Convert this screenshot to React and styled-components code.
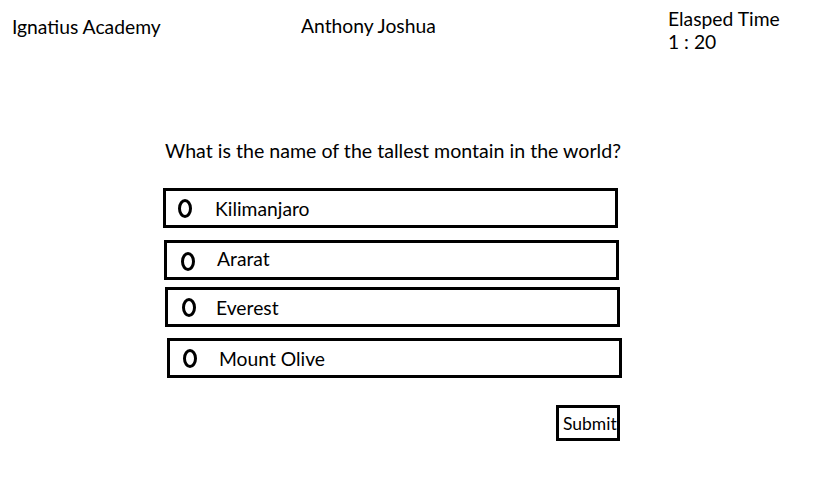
import React from "react";
import styled, { createGlobalStyle } from "styled-components";

const Global = createGlobalStyle`
  html, body { margin: 0; padding: 0; background: #fff; }
  body { font-family: Lato, "Noto Sans", sans-serif; color: #000; }
`;

const Page = styled.div`
  width: 838px;
  height: 499px;
  background: #fff;
  font-size: 19.3px;
  line-height: 22px;
`;

const Header = styled.header`
  display: grid;
  grid-template-columns: 289px 367px auto;
  padding-left: 12px;
  height: 60px;
  box-sizing: border-box;
`;

const Brand = styled.div`
  padding-top: ${(p) => p.$top}px;
`;

const Timer = styled.div`
  padding-top: 7px;
  display: flex;
  flex-direction: column;
  line-height: 23px;
`;

const Main = styled.main`
  display: flex;
  flex-direction: column;
  align-items: flex-start;
  padding-left: 163px;
  padding-top: 80px;
`;

const Question = styled.p`
  margin: 0 0 0 2px;
  font-size: 19.6px;
`;

const Options = styled.div`
  display: flex;
  flex-direction: column;
  margin-top: 26px;
`;

const Option = styled.label`
  box-sizing: border-box;
  display: flex;
  align-items: center;
  width: 455px;
  height: 40px;
  margin-left: ${(p) => p.$shift}px;
  margin-top: ${(p) => p.$gap}px;
  border: 3px solid #000;
  padding-left: ${(p) => p.$radioX}px;
  cursor: pointer;
`;

const Radio = styled.span`
  box-sizing: border-box;
  width: 14px;
  height: 19px;
  border: 3px solid #000;
  border-radius: 50%;
  margin-top: ${(p) => p.$dy}px;
  flex: none;
`;

const OptionText = styled.span`
  margin-left: ${(p) => p.$textX}px;
  margin-top: ${(p) => p.$ty}px;
`;

const Actions = styled.div`
  display: flex;
  justify-content: flex-end;
  width: 457px;
  margin-top: 27px;
`;

const Submit = styled.button`
  box-sizing: border-box;
  width: 64px;
  height: 36px;
  border: 3px solid #000;
  background: #fff;
  padding: 0 0 0 4px;
  font-family: Lato, "Noto Sans", sans-serif;
  font-size: 17.5px;
  color: #000;
  text-align: left;
  overflow: visible;
  white-space: nowrap;
  cursor: pointer;
`;

const options = [
  { label: "Kilimanjaro", shift: 0, gap: 0, radioX: 12, textX: 23, dy: 0, ty: 2 },
  { label: "Ararat", shift: 1, gap: 12, radioX: 14, textX: 22, dy: 3, ty: -2 },
  { label: "Everest", shift: 2, gap: 7, radioX: 14, textX: 20, dy: 0, ty: 1 },
  { label: "Mount Olive", shift: 4, gap: 11, radioX: 13, textX: 22, dy: 0, ty: 2 },
];

export default function App() {
  return (
    <Page>
      <Global />
      <Header>
        <Brand $top={16}>Ignatius Academy</Brand>
        <Brand $top={15}>Anthony Joshua</Brand>
        <Timer>
          <span>Elasped Time</span>
          <span>1 : 20</span>
        </Timer>
      </Header>
      <Main>
        <Question>What is the name of the tallest montain in the world?</Question>
        <Options>
          {options.map((o) => (
            <Option key={o.label} $shift={o.shift} $gap={o.gap} $radioX={o.radioX}>
              <Radio $dy={o.dy} />
              <OptionText $textX={o.textX} $ty={o.ty}>{o.label}</OptionText>
            </Option>
          ))}
        </Options>
        <Actions>
          <Submit>Submit</Submit>
        </Actions>
      </Main>
    </Page>
  );
}
